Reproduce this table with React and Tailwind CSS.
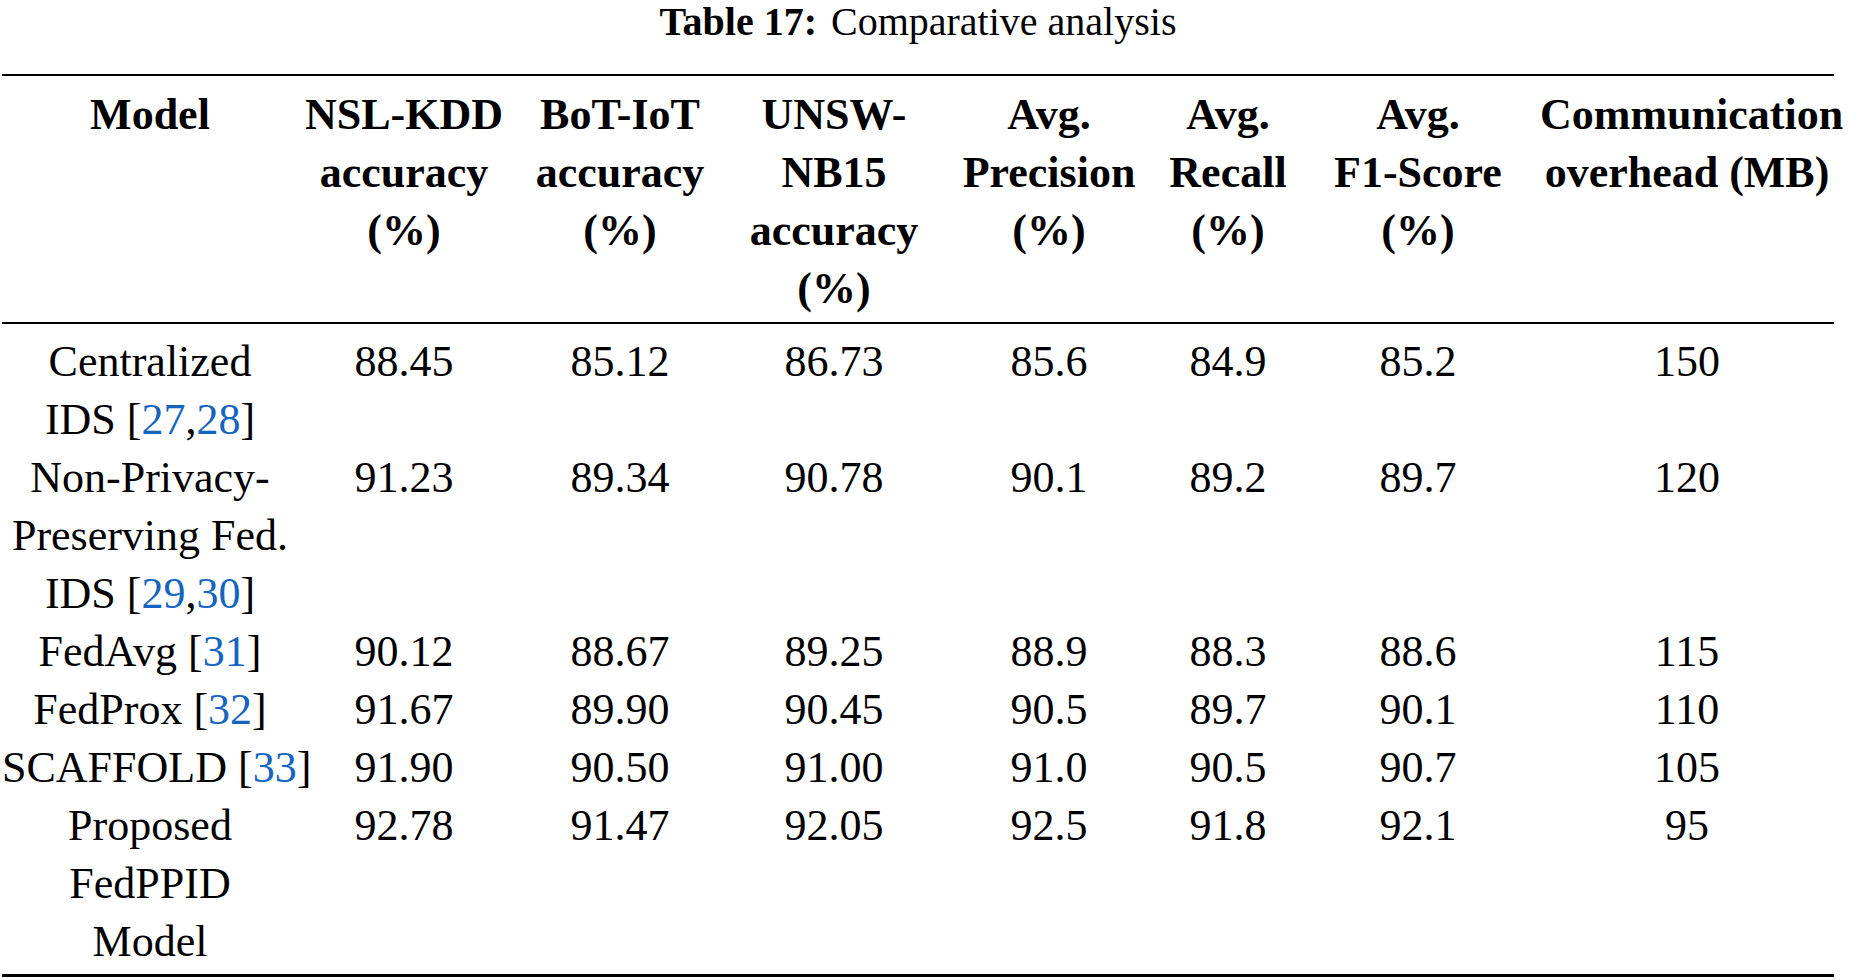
import React from 'react';

const cols = 'grid grid-cols-[296px_212px_220px_208px_222px_136px_244px_294px]';

const Cite = ({ refs }) => (
  <>
    [
    {refs.map((r, i) => (
      <span key={r}>
        {i > 0 && ','}
        <span className="text-[#1565c0]">{r}</span>
      </span>
    ))}
    ]
  </>
);

const headers = [
  ['Model'],
  ['NSL-KDD', 'accuracy', '(%)'],
  ['BoT-IoT', 'accuracy', '(%)'],
  ['UNSW-', 'NB15', 'accuracy', '(%)'],
  ['Avg.', 'Precision', '(%)'],
  ['Avg.', 'Recall', '(%)'],
  ['Avg.', 'F1-Score', '(%)'],
  ['Communication', 'overhead (MB)'],
];

const rows = [
  {
    model: ['Centralized', <>IDS <Cite refs={[27, 28]} /></>],
    vals: ['88.45', '85.12', '86.73', '85.6', '84.9', '85.2', '150'],
  },
  {
    model: ['Non-Privacy-', 'Preserving Fed.', <>IDS <Cite refs={[29, 30]} /></>],
    vals: ['91.23', '89.34', '90.78', '90.1', '89.2', '89.7', '120'],
  },
  {
    model: [<>FedAvg <Cite refs={[31]} /></>],
    vals: ['90.12', '88.67', '89.25', '88.9', '88.3', '88.6', '115'],
  },
  {
    model: [<>FedProx <Cite refs={[32]} /></>],
    vals: ['91.67', '89.90', '90.45', '90.5', '89.7', '90.1', '110'],
  },
  {
    model: [<>SCAFFOLD <Cite refs={[33]} /></>],
    vals: ['91.90', '90.50', '91.00', '91.0', '90.5', '90.7', '105'],
  },
  {
    model: ['Proposed', 'FedPPID', 'Model'],
    vals: ['92.78', '91.47', '92.05', '92.5', '91.8', '92.1', '95'],
  },
];

export default function App() {
  return (
    <div className="w-[1858px] h-[980px] bg-white text-black font-['Liberation_Serif',serif] overflow-hidden">
      <div className="ml-[2px] w-[1832px]">
        {/* caption */}
        <div className="h-[74px] text-center text-[40px] leading-[44px] whitespace-nowrap">
          <span className="font-bold">Table 17:</span>
          <span className="ml-[14px]">Comparative analysis</span>
        </div>

        <div className="h-[2px] bg-black" />

        {/* header */}
        <div className={`${cols} pt-[10px] pb-[4px] text-[44px] leading-[58px] font-bold text-center`}>
          {headers.map((lines, i) => (
            <div key={i}>
              {lines.map((l) => (
                <div key={l} className="whitespace-nowrap">{l}</div>
              ))}
            </div>
          ))}
        </div>

        <div className="h-[2px] bg-black" />

        {/* body */}
        <div className="pt-[9px] pb-[3px] text-[44px] leading-[58px] text-center">
          {rows.map((row, i) => (
            <div key={i} className={cols}>
              <div>
                {row.model.map((l, j) => (
                  <div key={j} className="whitespace-nowrap">{l}</div>
                ))}
              </div>
              {row.vals.map((v, j) => (
                <div key={j}>{v}</div>
              ))}
            </div>
          ))}
        </div>

        <div className="h-[3px] bg-black" />
      </div>
    </div>
  );
}
